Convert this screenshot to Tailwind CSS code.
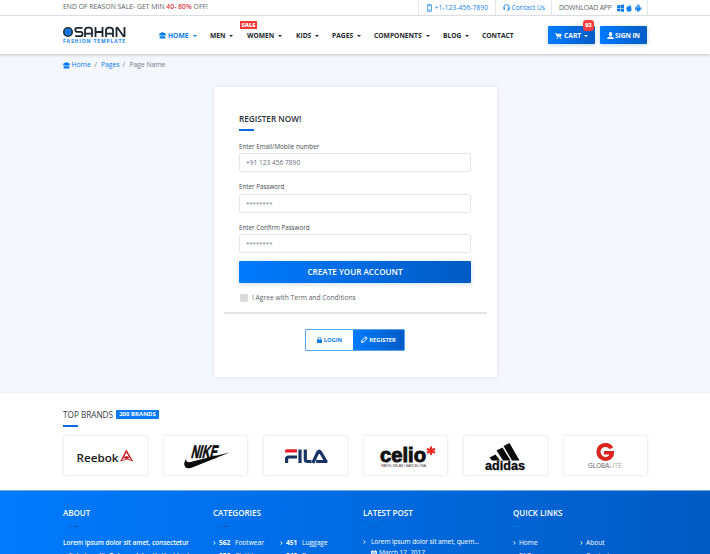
<!DOCTYPE html>
<html lang="en">
<head>
<meta charset="utf-8">
<title>Osahan Fashion - Register</title>
<script src="https://cdn.jsdelivr.net/npm/@tailwindcss/browser@4"></script>
</head>
<body class="w-[710px] h-[554px] overflow-hidden bg-white font-['Open_Sans','Noto_Sans',sans-serif] text-[6.7px] leading-[10px] text-[#5b5f66] whitespace-nowrap">
<svg class="hidden">
  <symbol id="store" viewBox="0 0 16 16"><path d="M8 0l3.500 2.500L14 2l2 5-2 1.500-2.500-1L8 9 4.500 7.500l-2.500 1L0 7l2-5 2.500.5zM1.500 10l3-1L8 10.500 11.500 9l3 1v5h-13z"/></symbol>
  <symbol id="chev" viewBox="0 0 6 8"><path d="M1 1l3.500 3L1 7" fill="none" stroke="currentColor" stroke-width="1.700"/></symbol>
</svg>

<!-- Top bar -->
<div class="h-4 border-b border-[#e3e6ea] pl-[63px] flex items-start">
  <p class="w-[355px] pt-[2px] text-[6.800px] tracking-[0.02px]">END OF REASON SALE- GET MIN <b class="font-semibold text-[#dc3545]">40- 80%</b> OFF!</p>
  <div class="h-[15px] w-[77px] border-l border-[#e3e6ea] flex pl-[7.500px] pt-[3px] text-[#1583ee] text-[6.850px]">
    <svg class="w-[5px] h-[8px] mr-[3px] mt-[1px]" viewBox="0 0 5 8" fill="none" stroke="currentColor" stroke-width=".7"><rect x=".5" y=".5" width="4" height="7" rx=".7"/><path d="M.5 1.800h4M.5 6h4"/></svg>+1-123-456-7890</div>
  <div class="h-[15px] w-[56px] border-l border-[#e3e6ea] flex pl-[7px] pt-[3px] text-[#1583ee] text-[6.600px]">
    <svg class="w-[7px] h-[7px] mr-[1.500px] mt-[1px]" viewBox="0 0 8 8" fill="none" stroke="currentColor"><path d="M1 5V3.700a3 3 0 0 1 6 0V5M7 5.500Q7 7.400 4.500 7.400"/><path d="M1.400 4v2.500M6.600 4v2.500" stroke-width="1.500"/></svg>Contact Us</div>
  <div class="h-[15px] w-[97px] border-x border-[#e3e6ea] flex pl-[7px] pt-[3px] text-[6.9px]"><span class="w-[58px] tracking-[-0.15px]">DOWNLOAD APP</span>
    <svg class="w-[25px] h-[8px] mt-[1px] text-[#087cf0]" viewBox="0 0 25 8" fill="currentColor"><path d="M0 1.500l3-.5v3H0zM3.500.9L7 .4V4H3.500zM0 4.400h3v3L0 7zM3.500 4.400H7V8l-3.500-.5z"/><path d="M12.400 2.300q1.300-.7 2.200.4-1.400 1.300.2 2.600-.8 2.300-1.800 2.400l-.9-.3-.9.300Q9.500 7.200 9.300 4.600q.2-2.700 2.500-2.300zM12 1.900Q12 .5 13.500 0q.1 1.600-1.500 1.900"/><path d="M19.300 3.200h3.900v3.200h-.8v1.400h-.9V6.400h-.6v1.400H20V6.400h-.7zM19.400 2.800q.1-1 .9-1.400L19.800.5l.4-.2.5.9h1.100l.5-.9.400.2-.5.900q.9.400.9 1.400zM18 3.300h1v2.500h-1zM23.500 3.300h1v2.500h-1z"/></svg></div>
</div>

<!-- Header -->
<header class="relative z-10 h-[38px] flex items-center pl-[63px] shadow-[0_1px_3px_rgba(0,0,0,0.22)] bg-white text-[#23282e] font-bold text-[6.7px]">
  <svg class="w-[63px] h-[19px] mb-[1px] mr-[33px]" viewBox="0 0 63 19"><circle cx="5" cy="7" r="4.200" fill="#1683f7" stroke="#1d2730" stroke-width="1.600"/><circle cx="5" cy="7" r="1.900" fill="#146bc9"/><g fill="none" stroke="#1d2730" stroke-width="1.800" stroke-linejoin="round"><path d="M19.500 2.800H14q-1.700 0-1.700 2t1.700 2h3.700q1.800 0 1.800 2.200t-1.800 2.200h-5.500M22 12V5.500q0-2.800 2.800-2.800h1.400Q29 2.700 29 5.500V12M22 8.700h7M32.500 2v10M39.500 2v10M32.500 7h7M43 12V5.500q0-2.800 2.800-2.800h1.400Q50 2.700 50 5.500V12M43 8.700h7M53.500 12V2.800h1l6 8.400h1V2"/></g><text x="0" y="18" font-size="5" font-weight="700" fill="#1683f7" textLength="62" lengthAdjust="spacing">FASHION TEMPLATE</text></svg>
  <nav class="flex items-center pt-[1px]">
    <a class="w-[51px] flex items-center text-[#087cf0]"><svg class="w-[7px] h-[7px] mr-[2px]" fill="currentColor"><use href="#store"/></svg><span class="w-[25px]">HOME</span><i class="border-x-2 border-x-transparent border-t-2"></i></a>
    <a class="w-[37px] flex items-center"><span class="w-[19px]">MEN</span><i class="border-x-2 border-x-transparent border-t-2"></i></a>
    <a class="relative w-[49px] flex items-center"><span class="w-[31px]">WOMEN</span><i class="border-x-2 border-x-transparent border-t-2"></i><b class="absolute left-[-7px] top-[-10px] w-[17px] h-[8px] bg-[#fb3838] text-white text-[5.700px] leading-[8px] text-center">SALE</b></a>
    <a class="w-[36px] flex items-center"><span class="w-[19px]">KIDS</span><i class="border-x-2 border-x-transparent border-t-2"></i></a>
    <a class="w-[42px] flex items-center"><span class="w-[25px]">PAGES</span><i class="border-x-2 border-x-transparent border-t-2"></i></a>
    <a class="w-[69px] flex items-center"><span class="w-[52px]">COMPONENTS</span><i class="border-x-2 border-x-transparent border-t-2"></i></a>
    <a class="w-[39px] flex items-center"><span class="w-[22px]">BLOG</span><i class="border-x-2 border-x-transparent border-t-2"></i></a>
    <a class="w-[66px]">CONTACT</a>
  </nav>
  <a class="relative w-[47px] h-[18px] mr-[5px] rounded-[1px] bg-linear-to-r from-[#007bff] to-[#005bc4] shadow-[0_1px_4px_rgba(0,91,196,0.25)] text-white flex items-center pt-[1px] pl-[7px]"><svg class="w-[7px] h-[6px] mr-[2px]" viewBox="0 0 7 6" fill="none" stroke="currentColor" stroke-width=".8"><path d="M0 .5h1.300l.8 3.200h3.800"/><path d="M1.800 1.200h4.500l-.5 1.800H2.200z" fill="currentColor"/><circle cx="2.500" cy="5.200" r=".4"/><circle cx="5.400" cy="5.200" r=".4"/></svg><span class="w-[20px]">CART</span><i class="border-x-2 border-x-transparent border-t-2"></i><b class="absolute right-[1px] top-[-6px] w-[11px] h-[11px] rounded-[3px] bg-[#fb3e3e] text-[5.500px] leading-[11px] text-center">02</b></a>
  <a class="w-[47px] h-[18px] rounded-[1px] bg-linear-to-r from-[#007bff] to-[#005bc4] shadow-[0_1px_4px_rgba(0,91,196,0.25)] text-white flex items-center pt-[1px] pl-[7px] tracking-[-0.1px]"><svg class="w-[7px] h-[7px] mr-[1px]" viewBox="0 0 7 7" fill="currentColor"><ellipse cx="3.500" cy="2.200" rx="1.700" ry="2.100"/><path d="M0 7q0-2 2.600-2.600h1.800Q7 5 7 7z"/></svg>SIGN IN</a>
</header>

<!-- Registration -->
<main class="h-[339px] bg-[#f4f7fd] border-b border-[#edf1f6] pt-[6px]">
  <div class="h-[10px] pl-[63px] flex items-center text-[#087cf0] text-[6.800px]"><svg class="w-[7px] h-[7px] mr-[1.500px]" fill="currentColor"><use href="#store"/></svg><span class="w-[23px]">Home</span><span class="w-[6.500px] text-[#777d84]">/</span><span class="w-[21.500px]">Pages</span><span class="w-[7px] text-[#777d84]">/</span><span class="text-[#777d84] tracking-[-0.05px]">Page Name</span></div>
  <section class="w-[285px] h-[292px] mt-[16px] ml-[213px] bg-white border border-[#eaeef2] rounded-[2px] shadow-[0_0_3px_rgba(0,0,0,0.07)] pt-[26px] px-[10px]">
    <div class="px-[15px]">
      <h1 class="font-semibold text-[8.200px] leading-[12px] text-[#2c333b]">REGISTER NOW!</h1>
      <div class="w-[15px] h-[1.500px] mt-[4px] bg-[#0869dd]"></div>
      <div class="h-[40.500px] pt-[11px] text-[#45494e] text-[6.250px]"><div class="h-[11.500px]">Enter Email/Mobile number</div><div class="w-[232px] h-[19px] border border-[#e3e5e8] rounded-[2px] px-[6px] leading-[18px] text-[#697179] text-[6.600px]">+91 123 456 7890</div></div>
      <div class="h-[40.500px] pt-[11px] text-[#45494e] text-[6.250px]"><div class="h-[11.500px]">Enter Password</div><div class="w-[232px] h-[19px] border border-[#e3e5e8] rounded-[2px] px-[6px] leading-[19px] text-[#697179] text-[6px]">********</div></div>
      <div class="h-[41.500px] pt-[11px] text-[#45494e] text-[6.250px]"><div class="h-[11.500px]">Enter Confirm Password</div><div class="w-[232px] h-[19px] border border-[#e3e5e8] rounded-[2px] px-[6px] leading-[19px] text-[#697179] text-[6px]">********</div></div>
      <button class="block w-[232px] h-[22px] mt-[8px] rounded-[1px] bg-linear-to-r from-[#007bff] to-[#005bc4] shadow-[0_1px_5px_rgba(0,91,196,0.22)] text-white text-[8.150px] font-semibold">CREATE YOUR ACCOUNT</button>
      <label class="flex items-center mt-[10px]"><i class="w-[8px] h-[8px] ml-[1px] mr-[4px] bg-[#dadada] rounded-[1px]"></i>I Agree with Term and Conditions</label>
    </div>
    <div class="h-[1.500px] mt-[9px] bg-[#e2e3e4]"></div>
    <div class="flex mt-[15px] ml-[81px] w-[100px] h-[22.500px] border border-[#55a5fb] rounded-[1px] text-[5.700px] font-bold">
      <a class="w-[47px] flex items-center justify-center gap-[2px] text-[#087cf0]"><svg class="w-[5px] h-[6px]" viewBox="0 0 5 6" fill="currentColor"><path d="M0 2.500h5V6H0z"/><path d="M1.100 2.800V1.700a1.400 1.400 0 0 1 2.800 0v1.100" fill="none" stroke="currentColor" stroke-width=".8"/></svg>LOGIN</a>
      <a class="flex-1 flex items-center justify-center gap-[1px] bg-linear-to-r from-[#007bff] to-[#005bc4] text-white"><svg class="w-[7px] h-[7px]" viewBox="0 0 7 7" fill="none" stroke="currentColor" stroke-width=".9"><path d="M.5 6.500l.4-1.900L4.700.7l1.600 1.600-3.900 3.800zM3.900 1.500l1.600 1.600M1 4.600l1.400 1.400"/></svg>REGISTER</a>
    </div>
  </section>
</main>

<!-- Brands -->
<section class="h-[97px] pt-[16px] pl-[63px]">
  <div class="flex items-center h-[11px] text-[8.200px] text-[#343b43]"><h2 class="w-[53px]">TOP BRANDS</h2><b class="w-[43px] h-[9px] rounded-[1px] bg-[#0879f8] text-white text-[6px] leading-[9px] text-center">200 BRANDS</b></div>
  <div class="w-[15px] h-[1.500px] mt-[5px] bg-[#0869dd]"></div>
  <div class="mt-[8.500px] grid grid-cols-6 gap-[15px] w-[585px]">
    <div class="h-[41px] border border-[#f0f1f2] rounded-[2px] shadow-[0_0_2px_rgba(0,0,0,0.08)]"><svg viewBox="63 435 85 41" class="-m-px w-[85px] h-[41px]"><text x="76.500" y="461.500" font-family="Open Sans" font-size="11.500" font-weight="600" fill="#171717" textLength="42" lengthAdjust="spacingAndGlyphs">Reebok</text><path fill="#c91d24" fill-rule="evenodd" d="M126.300 449.500l7 12-6.300-2-7 2zM126.400 452.500l-2.300 4.500 2.500-1 2.300 1zM123.500 458l-1.600 2.200 4.200-1.500zM127.500 458.200l3.600 1.700-1.500-2.500z"/></svg></div>
    <div class="h-[41px] border border-[#f0f1f2] rounded-[2px] shadow-[0_0_2px_rgba(0,0,0,0.08)]"><svg viewBox="163 435 85 41" class="-m-px w-[85px] h-[41px]"><path d="M188 455.500q-3.500 4.500-.8 6.300 1.500.9 6-.5L229.500 452.500l-36 14.500q-5.500 2.300-8 .5-3.500-3.500 2.500-12z" fill="#090909"/><text transform="translate(190.500 458) skewX(-14)" font-family="Liberation Sans" font-size="18" font-weight="700" fill="#090909" stroke="#090909" stroke-width=".6" textLength="26" lengthAdjust="spacingAndGlyphs">NIKE</text></svg></div>
    <div class="h-[41px] border border-[#f0f1f2] rounded-[2px] shadow-[0_0_2px_rgba(0,0,0,0.08)]"><svg viewBox="263 435 85 41" class="-m-px w-[85px] h-[41px]"><g fill="none" stroke="#173465" stroke-width="3.200"><path d="M300 449.500V463M305.300 449.500v10q0 2 2 2h4.200M286.600 463v-4q0-2 2-2h8.400"/><path d="M312.800 463l5.200-11q1.200-2 2.400 0l5.700 9.500h-10" stroke-linejoin="round"/></g><path fill="#e81c2c" d="M286.500 449.300H297v3.200h-12v-1.500q0-1.700 1.500-1.700z"/></svg></div>
    <div class="h-[41px] border border-[#f0f1f2] rounded-[2px] shadow-[0_0_2px_rgba(0,0,0,0.08)]"><svg viewBox="363 435 85 41" class="-m-px w-[85px] h-[41px]"><text x="380" y="461.500" font-family="Liberation Sans" font-size="19.500" font-weight="700" fill="#111" stroke="#111" stroke-width=".9" textLength="46" lengthAdjust="spacingAndGlyphs">celio</text><path d="M431 446.500v8.500M427 448.800l8 4M435 448.800l-8 4" stroke="#f0271f" stroke-width="2.200"/><text x="381" y="467" font-family="Liberation Sans" font-size="3.600" fill="#333" textLength="45" lengthAdjust="spacingAndGlyphs">PARIS | MILAN | BARCELONA</text></svg></div>
    <div class="h-[41px] border border-[#f0f1f2] rounded-[2px] shadow-[0_0_2px_rgba(0,0,0,0.08)]"><svg viewBox="463 435 85 41" class="-m-px w-[85px] h-[41px]"><path d="M503.500 446l6-3L519.500 460.500H512zM496.500 450.500l6-3 8 13h-7.500zM489.500 457.500l6-3 4.500 6h-8z" fill="#090909"/><text x="485" y="469.500" font-family="Liberation Sans" font-size="12" font-weight="700" fill="#090909" stroke="#090909" stroke-width=".3" textLength="40" lengthAdjust="spacingAndGlyphs">adidas</text></svg></div>
    <div class="h-[41px] border border-[#f0f1f2] rounded-[2px] shadow-[0_0_2px_rgba(0,0,0,0.08)]"><svg viewBox="563 435 85 41" class="-m-px w-[85px] h-[41px]"><path d="M611.500 448.300a7 7 0 1 0 .5 6.200" fill="none" stroke="#d9251d" stroke-width="4"/><path d="M604 451h10v3l-3 4-2-3.500h-5z" fill="#d9251d"/><text x="588" y="468" font-family="Liberation Sans" font-size="6.800" fill="#666" textLength="34" lengthAdjust="spacingAndGlyphs">GLOBA<tspan fill="#aaa">LITE</tspan></text></svg></div>
  </div>
</section>

<!-- Footer -->
<footer class="h-[64px] bg-linear-to-r from-[#007bff] to-[#005bc4] border-t border-[#6da9e5] pt-[16px] pl-[63px] grid grid-cols-[150px_150px_150px_150px] text-white overflow-hidden text-[6.600px]">
  <section><h3 class="text-[8px] leading-[12px] font-semibold">ABOUT</h3><div class="w-[15px] h-px mt-[7px] mb-[9px] bg-linear-to-r from-[#007bff] to-[#004fae]"></div><p class="font-semibold text-[6.550px] tracking-[-0.07px] leading-[13px] h-[26px]">Lorem ipsum dolor sit amet, consectetur<br>adipiscing elit. Quisque lobortis tincidunt</p></section>
  <section><h3 class="text-[8px] leading-[12px] font-semibold">CATEGORIES</h3><div class="w-[15px] h-px mt-[7px] mb-[9px] bg-linear-to-r from-[#007bff] to-[#004fae]"></div>
    <div class="grid grid-cols-[67px_70px] leading-[13px]"><a class="flex items-center"><svg class="w-[3px] h-[4px] mr-[3px]"><use href="#chev"/></svg><b class="w-[16px]">562</b>Footwear</a><a class="flex items-center"><svg class="w-[3px] h-[4px] mr-[3px]"><use href="#chev"/></svg><b class="w-[16px]">451</b>Luggage</a><a class="flex items-center"><svg class="w-[3px] h-[4px] mr-[3px]"><use href="#chev"/></svg><b class="w-[16px]">356</b>Clothing</a><a class="flex items-center"><svg class="w-[3px] h-[4px] mr-[3px]"><use href="#chev"/></svg><b class="w-[16px]">242</b>Bags</a></div></section>
  <section><h3 class="text-[8px] leading-[12px] font-semibold">LATEST POST</h3><div class="w-[15px] h-px mt-[7px] mb-[9px] bg-linear-to-r from-[#007bff] to-[#004fae]"></div>
    <div class="flex items-start"><svg class="w-[3px] h-[4px] mr-[5px] mt-[4px]"><use href="#chev"/></svg><div class="leading-[12px] tracking-[-0.1px]">Lorem ipsum dolor sit amet, quem...<div class="flex leading-[10px]"><svg class="w-[6px] h-[6px] mt-[2px] mr-[2px]" viewBox="0 0 6 6"><path d="M0 1h6v5H0zM1.200 0h.8v1h-.8zM4 0h.8v1H4z" fill="currentColor"/><path d="M.5 2.200h5M2 2.200v3.500M4 2.200v3.500M.5 4h5" stroke="#006bdf" stroke-width=".4"/></svg>March 12, 2017</div></div></div></section>
  <section><h3 class="text-[8px] leading-[12px] font-semibold">QUICK LINKS</h3><div class="w-[15px] h-px mt-[7px] mb-[9px] bg-linear-to-r from-[#007bff] to-[#0061cc]"></div>
    <div class="grid grid-cols-[67px_70px] leading-[13px]"><a class="flex items-center"><svg class="w-[3px] h-[4px] mr-[3px]"><use href="#chev"/></svg>Home</a><a class="flex items-center"><svg class="w-[3px] h-[4px] mr-[3px]"><use href="#chev"/></svg>About</a><a class="flex items-center"><svg class="w-[3px] h-[4px] mr-[3px]"><use href="#chev"/></svg>FAQ</a><a class="flex items-center"><svg class="w-[3px] h-[4px] mr-[3px]"><use href="#chev"/></svg>Contact</a></div></section>
</footer>
</body>
</html>
